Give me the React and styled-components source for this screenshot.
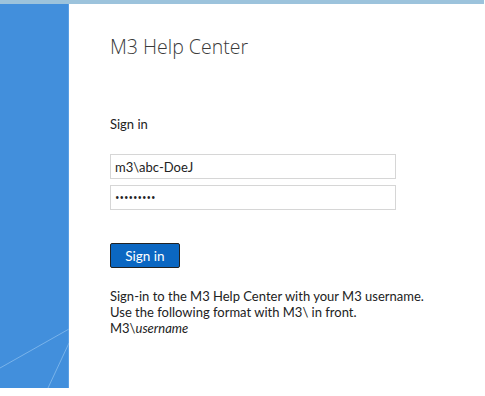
import React from "react";
import styled, { createGlobalStyle } from "styled-components";

const Global = createGlobalStyle`
  html, body { margin: 0; padding: 0; background: #fff; }
  body { font-family: Lato, "Open Sans", sans-serif; color: #222; }
`;

const Page = styled.div`
  width: 485px;
  height: 396px;
  overflow: hidden;
  background: #fff;
`;

const TopStrip = styled.div`
  height: 4px;
  width: 484px;
  background: #9cc3dc;
`;

const Main = styled.div`
  display: flex;
`;

const SidePanel = styled.div`
  width: 69px;
  height: 384px;
  background: #428fdc;
  border-right: 1px solid #5a9fe4;
  box-sizing: border-box;
  flex-shrink: 0;
  svg { display: block; }
`;

const Content = styled.div`
  padding-left: 41px;
  display: flex;
  flex-direction: column;
  width: 286px;
`;

const Title = styled.h1`
  margin: 29px 0 0;
  font-family: "Open Sans", sans-serif;
  font-weight: 300;
  font-size: 19.5px;
  line-height: 28px;
  color: #3a3a3a;
`;

const Label = styled.div`
  margin-top: 54px;
  font-size: 13px;
  line-height: 18px;
  color: #222;
`;

const Field = styled.div`
  height: 25px;
  box-sizing: border-box;
  border: 1px solid #d6d6d6;
  margin-top: ${(p) => p.$top}px;
  display: flex;
  align-items: center;
  padding-left: 4px;
  font-family: ${(p) => (p.$dots ? '"Open Sans", sans-serif' : "inherit")};
  font-size: ${(p) => (p.$dots ? "12px" : "13px")};
  color: #222;
  letter-spacing: 0;
`;

const Button = styled.button`
  margin-top: 33px;
  width: 70px;
  height: 25px;
  box-sizing: border-box;
  background: #0b67c2;
  border: 1px solid #222;
  border-radius: 2px;
  color: #fff;
  font-family: inherit;
  font-size: 13.5px;
  padding: 0;
  cursor: pointer;
`;

const Help = styled.p`
  margin: 20px 0 0;
  font-size: 13px;
  line-height: 16px;
  color: #222;
  white-space: nowrap;
  em { font-style: italic; }
`;

export default function App() {
  return (
    <Page>
      <Global />
      <TopStrip />
      <Main>
        <SidePanel>
          <svg width="69" height="384" viewBox="0 0 69 384">
            <line x1="0" y1="364" x2="69" y2="325" stroke="#79b3ea" strokeWidth="1" />
            <line x1="48" y1="384" x2="69" y2="339" stroke="#79b3ea" strokeWidth="1" />
          </svg>
        </SidePanel>
        <Content>
          <Title>M3 Help Center</Title>
          <Label>Sign in</Label>
          <Field $top={21}>m3\abc-DoeJ</Field>
          <Field $top={6} $dots>•••••••••</Field>
          <Button>Sign in</Button>
          <Help>
            Sign-in to the M3 Help Center with your M3 username.
            <br />
            Use the following format with M3\ in front.
            <br />
            M3\<em>username</em>
          </Help>
        </Content>
      </Main>
    </Page>
  );
}
